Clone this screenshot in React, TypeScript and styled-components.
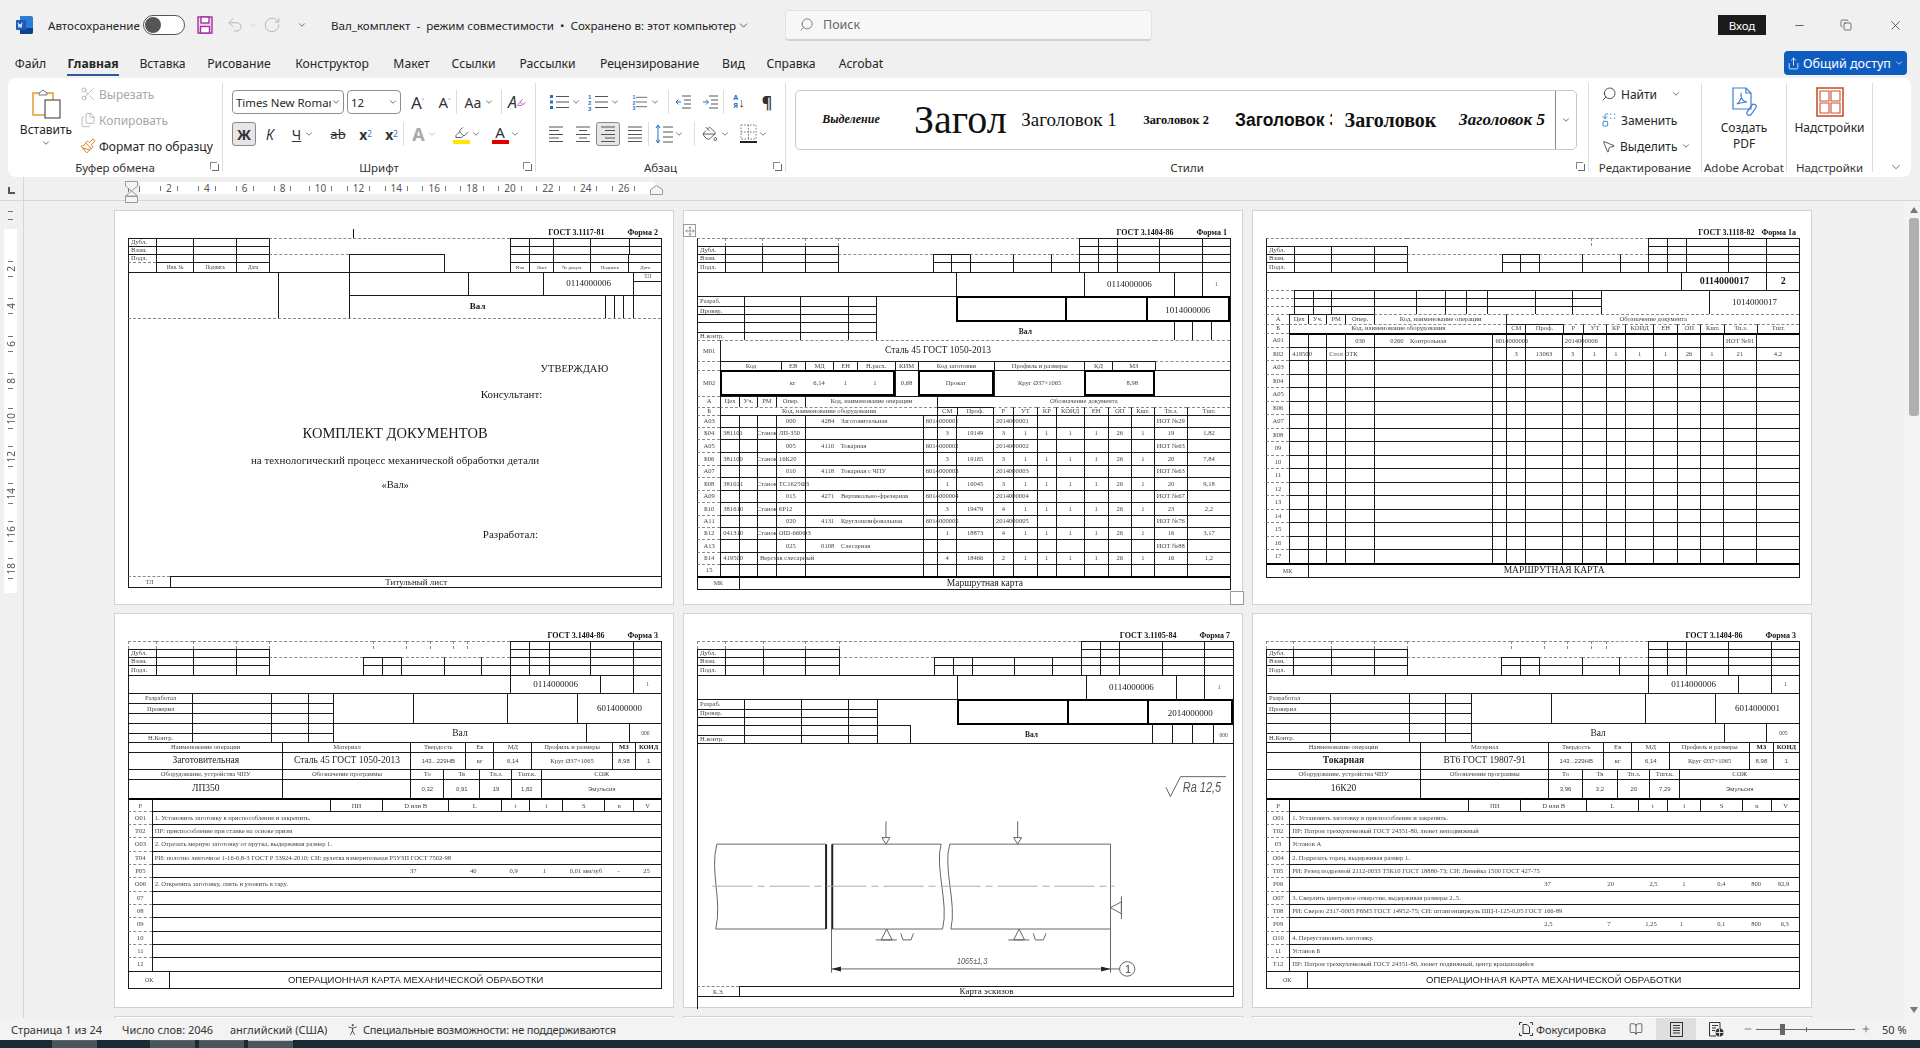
import React from "react";
import styled, { createGlobalStyle } from "styled-components";
import {
  ChevronDown, Undo2, RotateCw, Search, Scissors, Files, Paintbrush, X, Minus, Plus, Share,
  PaintBucket, Highlighter, PersonStanding, BookOpen, MousePointer2, Replace, Copy, Move,
} from "lucide-react";

const UI = `"Noto Sans", Roboto, sans-serif`;
const SERIF = `"Liberation Serif", serif`;

const Global = createGlobalStyle`
  html, body { margin: 0; padding: 0; background: #f0f0f0; }
  body { font-family: ${UI}; color: #262626; }
`;

const Shell = styled.div`
  width: 1920px;
  height: 1048px;
  display: flex;
  flex-direction: column;
  overflow: hidden;
  background: #f0f0f0;
`;

/* ---------- title bar ---------- */
const TitleBar = styled.div`
  height: 50px;
  display: flex;
  align-items: center;
  font-size: 11.6px;
  flex: none;
`;
const Gap = styled.div<{ $ml?: number; $w?: number }>`
  display: flex;
  align-items: center;
  flex: none;
  margin-left: ${(p) => p.$ml || 0}px;
  width: ${(p) => (p.$w ? p.$w + "px" : "auto")};
  white-space: nowrap;
`;
const Toggle = styled.div`
  width: 42px;
  height: 20px;
  border: 1px solid #555;
  border-radius: 11px;
  background: #fff;
  box-sizing: border-box;
  display: flex;
  align-items: center;
  padding-left: 1px;
  &::before {
    content: "";
    width: 16px;
    height: 16px;
    border-radius: 50%;
    background: #555;
  }
`;
const SearchBox = styled.div`
  width: 367px;
  height: 31px;
  background: #f7f7f7;
  border: 1px solid #e2e2e2;
  border-bottom: 2px solid #d2d2d2;
  border-radius: 4px;
  box-sizing: border-box;
  display: flex;
  align-items: center;
  margin-left: 35px;
  padding-left: 13px;
  gap: 9px;
  color: #666;
  font-size: 12.5px;
  flex: none;
`;
const LoginBtn = styled.div`
  width: 48px;
  height: 20px;
  background: #1b1b1b;
  color: #fff;
  font-size: 11.5px;
  display: flex;
  align-items: center;
  justify-content: center;
  margin-left: 566px;
  flex: none;
`;

/* ---------- tabs ---------- */
const MenuBar = styled.div`
  height: 28px;
  display: flex;
  align-items: flex-start;
  flex: none;
  position: relative;
  font-size: 12.2px;
`;
const Tab = styled.div<{ $x: number; $w: number; $active?: boolean }>`
  margin-left: ${(p) => p.$x}px;
  width: ${(p) => p.$w}px;
  flex: none;
  display: flex;
  justify-content: center;
  height: 24px;
  line-height: 27px;
  white-space: nowrap;
  font-weight: ${(p) => (p.$active ? 700 : 400)};
  border-bottom: ${(p) => (p.$active ? "2px solid #2b5a9c" : "0")};
`;
const ShareBtn = styled.div`
  position: absolute;
  left: 1784px;
  top: 1px;
  width: 123px;
  height: 24px;
  border-radius: 4px;
  background: #0f5cc0;
  color: #fff;
  display: flex;
  align-items: center;
  justify-content: center;
  gap: 3px;
  font-size: 12.5px;
`;

/* ---------- ribbon ---------- */
const Ribbon = styled.div`
  height: 99px;
  margin: 0 9px 0 8px;
  background: #fff;
  border-radius: 8px;
  display: flex;
  padding: 5px 0;
  box-sizing: border-box;
  flex: none;
  position: relative;
  font-size: 12px;
`;
const Group = styled.div<{ $w: number; $last?: boolean }>`
  width: ${(p) => p.$w}px;
  box-sizing: border-box;
  border-right: ${(p) => (p.$last ? "0" : "1px solid #dcdcdc")};
  display: flex;
  flex-direction: column;
  position: relative;
  flex: none;
`;
const GroupBody = styled.div`
  flex: 1;
  display: flex;
  min-height: 0;
`;
const GroupLabel = styled.div`
  height: 17px;
  padding-top: 6px;
  box-sizing: border-box;
  line-height: 14px;
  text-align: center;
  white-space: nowrap;
  font-size: 11.5px;
  color: #333;
  position: relative;
  flex: none;
`;
const Launcher = styled.span`
  position: absolute;
  right: 3px;
  top: 9px;
  width: 6px;
  height: 6px;
  border-right: 1px solid #666;
  border-bottom: 1px solid #666;
  &::before {
    content: "";
    position: absolute;
    left: -2px;
    top: -2px;
    width: 6px;
    height: 6px;
    border-left: 1px solid #888;
    border-top: 1px solid #888;
  }
`;
const PasteCol = styled.div`
  width: 76px;
  display: flex;
  flex-direction: column;
  align-items: center;
  padding-top: 5px;
  flex: none;
`;
const PasteLabel = styled.div`
  margin-top: 3px;
  line-height: 16px;
`;
const ClipCol = styled.div`
  display: flex;
  flex-direction: column;
  margin: -2px 0 0 -4px;
`;
const ClipRow = styled.div<{ $off?: boolean }>`
  height: 26px;
  flex: none;
  display: flex;
  align-items: center;
  gap: 3px;
  white-space: nowrap;
  color: ${(p) => (p.$off ? "#a8a8a8" : "#262626")};
`;
const ToolRows = styled.div`
  display: flex;
  flex-direction: column;
  gap: 8px;
  padding: 7px 0 0 9px;
`;
const ToolRow = styled.div`
  display: flex;
  align-items: center;
  height: 24px;
  flex: none;
`;
const Tool = styled.div<{ $w?: number; $ml?: number; $on?: boolean; $off?: boolean; $fs?: number }>`
  width: ${(p) => p.$w || 16}px;
  height: 24px;
  margin-left: ${(p) => p.$ml || 0}px;
  display: flex;
  align-items: center;
  justify-content: center;
  flex: none;
  box-sizing: border-box;
  color: ${(p) => (p.$off ? "#aaa" : "#333")};
  border-radius: 3px;
  background: ${(p) => (p.$on ? "#e6e6e6" : "none")};
  border: ${(p) => (p.$on ? "1px solid #8a8a8a" : "0")};
  font-size: ${(p) => p.$fs || 13}px;
  sup, sub {
    font-size: 8px;
    line-height: 0;
    color: #2a75c8;
  }
`;
const ColorStack = styled.div`
  display: flex;
  flex-direction: column;
  align-items: center;
  line-height: 15px;
`;
const ColorBar = styled.div<{ $c: string }>`
  width: 17px;
  height: 4px;
  background: ${(p) => p.$c};
`;
const Sep = styled.div<{ $ml: number }>`
  width: 1px;
  height: 24px;
  background: #dcdcdc;
  margin-left: ${(p) => p.$ml}px;
  flex: none;
`;
const FieldBox = styled.div<{ $w: number; $ml?: number }>`
  width: ${(p) => p.$w}px;
  height: 24px;
  margin-left: ${(p) => p.$ml || 0}px;
  border: 1px solid #8e8e8e;
  border-radius: 4px;
  box-sizing: border-box;
  display: flex;
  align-items: center;
  justify-content: space-between;
  padding: 0 2px 0 3px;
  font-size: 11.4px;
  white-space: nowrap;
  overflow: hidden;
  flex: none;
`;
const Clip = styled.span`
  overflow: hidden;
  flex: 1;
`;
const SmallChev = styled(ChevronDown).attrs({ size: 10, strokeWidth: 1.6 })`
  flex: none;
`;
const Gallery = styled.div`
  margin: 7px 0 0 9px;
  width: 782px;
  height: 60px;
  border: 1px solid #c8c8c8;
  border-radius: 5px;
  box-sizing: border-box;
  display: flex;
  align-items: center;
  overflow: hidden;
`;
const StyleItem = styled.div<{ $w: number; $size: number; $i?: boolean; $b?: boolean; $sans?: boolean; $left?: boolean }>`
  width: ${(p) => p.$w}px;
  flex: none;
  overflow: hidden;
  white-space: nowrap;
  color: #111;
  text-align: ${(p) => (p.$left ? "left" : "center")};
  padding-left: ${(p) => (p.$left ? 8 : 0)}px;
  box-sizing: border-box;
  font-family: ${(p) => (p.$sans ? `"Liberation Sans", sans-serif` : SERIF)};
  font-size: ${(p) => p.$size}px;
  line-height: 1.15;
  font-style: ${(p) => (p.$i ? "italic" : "normal")};
  font-weight: ${(p) => (p.$b ? 700 : 400)};
`;
const GalleryArrow = styled.div`
  margin-left: auto;
  width: 23px;
  height: 100%;
  border-left: 1px solid #8a8a8a;
  box-sizing: border-box;
  display: flex;
  align-items: center;
  justify-content: center;
`;
const EditCol = styled.div`
  display: flex;
  flex-direction: column;
  padding-left: 12px;
  margin-top: -2px;
`;
const EditRow = styled.div`
  height: 26px;
  flex: none;
  display: flex;
  align-items: center;
  gap: 4px;
  white-space: nowrap;
`;
const BigCol = styled.div`
  flex: 1;
  display: flex;
  flex-direction: column;
  align-items: center;
  padding-top: 4px;
  line-height: 16px;
  text-align: center;
`;
const BigIcon = styled.div`
  height: 33px;
  line-height: 0;
`;
const Collapse = styled.div`
  position: absolute;
  right: 8px;
  bottom: 3px;
  color: #444;
  line-height: 0;
`;

/* ---------- rulers ---------- */
const RulerBar = styled.div`
  height: 24px;
  display: flex;
  border-bottom: 1px solid #d6d6d6;
  box-sizing: border-box;
  flex: none;
  position: relative;
`;
const Corner = styled.div`
  width: 24px;
  box-sizing: border-box;
  border-right: 1px solid #d6d6d6;
  display: flex;
  align-items: center;
  justify-content: center;
  &::before {
    content: "";
    width: 5px;
    height: 5px;
    margin-top: 3px;
    border-left: 2px solid #555;
    border-bottom: 2px solid #555;
  }
`;
const HTicks = styled.div`
  margin: 9px 0 0 88px;
  width: 28px;
  height: 6px;
  display: flex;
  gap: 10px;
  justify-content: flex-end;
  &::before, &::after {
    content: "";
    width: 1px;
    height: 6px;
    background: #777;
  }
`;
const HStrip = styled.div`
  margin-top: 5px;
  width: 515px;
  height: 12px;
  background: #fff;
  padding-left: 10px;
  box-sizing: border-box;
  display: flex;
`;
const HCell = styled.div`
  width: 37.9px;
  flex: none;
  display: flex;
  align-items: center;
  justify-content: center;
  gap: 5px;
  font-size: 10px;
  line-height: 12px;
  color: #555;
  &::before, &::after {
    content: "";
    width: 1px;
    height: 5px;
    background: #777;
  }
`;
const IndentMark = styled.div<{ $x: number; $y: number; $h: number }>`
  position: absolute;
  left: ${(p) => p.$x}px;
  top: ${(p) => p.$y}px;
  width: 12px;
  height: ${(p) => p.$h}px;
  line-height: 0;
`;
const DocArea = styled.div`
  flex: 1;
  display: flex;
  min-height: 0;
`;
const VRuler = styled.div`
  width: 23px;
  flex: none;
  display: flex;
  flex-direction: column;
  align-items: flex-start;
  padding-left: 4px;
  box-sizing: border-box;
`;
const VTicks = styled.div`
  height: 28px;
  width: 13px;
  flex: none;
  display: flex;
  flex-direction: column;
  align-items: center;
  justify-content: center;
  gap: 7px;
  &::before, &::after {
    content: "";
    width: 5px;
    height: 1px;
    background: #777;
  }
`;
const VStrip = styled.div`
  width: 13px;
  height: 364px;
  background: #fff;
  padding-top: 21px;
  box-sizing: border-box;
  display: flex;
  flex-direction: column;
  flex: none;
`;
const VCell = styled.div`
  height: 37.5px;
  flex: none;
  display: flex;
  flex-direction: column;
  align-items: center;
  justify-content: center;
  gap: 4px;
  color: #555;
  font-size: 10px;
  &::before, &::after {
    content: "";
    width: 5px;
    height: 1px;
    background: #777;
  }
`;
const VNum = styled.span`
  writing-mode: vertical-rl;
  transform: rotate(180deg);
  line-height: 12px;
`;
const Canvas = styled.div`
  flex: 1;
  border-left: 1px solid #d6d6d6;
  overflow: hidden;
  padding: 9px 0 0 90px;
`;
const PageGrid = styled.div`
  display: grid;
  grid-template-columns: repeat(3, 560px);
  column-gap: 9px;
  row-gap: 8px;
`;
const Scrollbar = styled.div`
  width: 17px;
  flex: none;
  background: #f3f3f3;
  display: flex;
  flex-direction: column;
  align-items: center;
  position: relative;
  padding-top: 6px;
  box-sizing: border-box;
`;
const ScrollArrow = styled.div<{ $down?: boolean }>`
  width: 0;
  height: 0;
  margin-left: 4px;
  border-left: 4px solid transparent;
  border-right: 4px solid transparent;
  ${(p) => (p.$down ? "border-top: 6px solid #777; margin-top: auto; margin-bottom: 5px;" : "border-bottom: 6px solid #777;")}
`;
const ScrollThumb = styled.div`
  width: 10px;
  height: 198px;
  margin: 5px 0 0 5px;
  border-radius: 3px;
  background: #b0b0b0;
`;

/* ---------- pages ---------- */
const Page = styled.div`
  width: 560px;
  height: 395px;
  background: #fff;
  border: 1px solid #d2d2d2;
  box-sizing: border-box;
  padding-left: 13px;
  position: relative;
  filter: blur(0.3px);
`;
const GostLine = styled.div<{ $gap: number; $w: number }>`
  width: ${(p) => p.$w}px;
  height: 27px;
  box-sizing: border-box;
  display: flex;
  justify-content: flex-end;
  align-items: flex-end;
  gap: ${(p) => p.$gap}px;
  padding-right: 4px;
  font: 700 8px/10px ${SERIF};
  color: #111;
  white-space: nowrap;
`;
const SheetBox = styled.div<{ $w: number }>`
  width: ${(p) => p.$w}px;
  box-sizing: content-box;
  border-right: 1px solid #1a1a1a;
  border-bottom: 1px solid #1a1a1a;
`;
const SheetRow = styled.div<{ $h: number; $cols: string }>`
  height: ${(p) => p.$h}px;
  display: grid;
  grid-template-columns: ${(p) => p.$cols};
`;
const edge = (k?: string) =>
  k === "n" ? "0" : k === "d" ? "1px dashed #8a8a8a" : k === "T" ? "2px solid #000" : "1px solid #1a1a1a";
const SheetCell = styled.div<{ $t?: string; $l?: string; $r?: boolean; $b?: boolean; $fs: number; $bold?: boolean; $left?: boolean; $v?: string; $sans?: boolean }>`
  min-width: 0;
  box-sizing: border-box;
  border-top: ${(p) => edge(p.$t)};
  border-left: ${(p) => edge(p.$l)};
  border-right: ${(p) => (p.$r ? edge("T") : "0")};
  border-bottom: ${(p) => (p.$b ? edge("T") : "0")};
  display: flex;
  justify-content: ${(p) => (p.$left ? "flex-start" : "center")};
  align-items: ${(p) => (p.$v === "lo" ? "flex-end" : p.$v === "hi" ? "flex-start" : "center")};
  padding-left: ${(p) => (p.$left ? 2 : 0)}px;
  padding-top: ${(p) => (p.$v === "hi" ? 2 : 0)}px;
  font-family: ${(p) => (p.$sans ? `"Liberation Sans", sans-serif` : SERIF)};
  font-size: ${(p) => p.$fs}px;
  font-weight: ${(p) => (p.$bold ? 700 : 400)};
  color: ${(p) => (p.$fs >= 8 || p.$bold ? "#1a1a1a" : "#444")};
  line-height: ${(p) => (p.$v ? 0 : 1)};
  white-space: nowrap;
`;
const TextCaret = styled.div`
  position: absolute;
  left: 238px;
  top: 18px;
  width: 1px;
  height: 9px;
  background: #111;
`;
const MoveHandle = styled.div`
  position: absolute;
  left: -1px;
  top: 13px;
  width: 13px;
  height: 13px;
  border: 1px solid #999;
  background: #fff;
  box-sizing: border-box;
  display: flex;
  align-items: center;
  justify-content: center;
`;
const SizeHandle = styled.div`
  position: absolute;
  left: 546px;
  top: 380px;
  width: 14px;
  height: 14px;
  border: 1px solid #999;
  background: #fff;
  box-sizing: border-box;
`;

/* ---------- status + taskbar ---------- */
const StatusBar = styled.div`
  height: 22px;
  background: #f3f3f3;
  display: flex;
  align-items: center;
  font-size: 11px;
  flex: none;
  white-space: nowrap;
  color: #333;
`;
const TightText = styled.span`
  letter-spacing: -0.2px;
`;
const ViewBtn = styled.div<{ $x: number; $on?: boolean }>`
  margin-left: ${(p) => p.$x}px;
  width: 40px;
  height: 22px;
  display: flex;
  align-items: center;
  justify-content: center;
  flex: none;
  background: ${(p) => (p.$on ? "#dedede" : "none")};
`;
const Zoomer = styled.div`
  margin-left: 3px;
  width: 99px;
  height: 11px;
  flex: none;
  position: relative;
  display: flex;
  align-items: center;
  &::before {
    content: "";
    width: 100%;
    height: 1px;
    background: #666;
  }
`;
const ZoomThumb = styled.div`
  position: absolute;
  left: 24px;
  top: 0;
  width: 5px;
  height: 11px;
  background: #666;
`;
const ZoomTick = styled.div`
  position: absolute;
  left: 50px;
  top: 3px;
  width: 1px;
  height: 5px;
  background: #666;
`;
const Taskbar = styled.div`
  height: 8px;
  background: #1c2a33;
  display: flex;
  flex: none;
`;
const TaskThumb = styled.div<{ $x: number; $on?: boolean }>`
  width: 45px;
  height: 8px;
  margin-left: ${(p) => p.$x}px;
  background: #4a555c;
  border-top: 1px solid ${(p) => (p.$on ? "#c8c8c8" : "#5a666d")};
  box-sizing: border-box;
`;
const SortText = styled.span`
  font-size: 7px;
  line-height: 8px;
  font-weight: 700;
  color: #1f6fc4;
`;

/* ---------- sheet data, rows measured in ruler units of the scan ---------- */
type CellSpec = [number, React.ReactNode?, string?, number?];
type RowSpec = [number, CellSpec[]];

function Sheet({ x0, y0, sx, rows }: { x0: number; y0: number; sx: number; rows: RowSpec[] }) {
  let y = y0;
  const end = rows[0][1][rows[0][1].length - 1][0];
  return (
    <SheetBox $w={Math.round((end - x0) / sx)}>
      {rows.map(([yEnd, cells], i) => {
        const h = +((yEnd - y) / 3).toFixed(2);
        y = yEnd;
        let x = x0;
        const cols = cells
          .map((c) => {
            const w = ((c[0] - x) / sx).toFixed(2);
            x = c[0];
            return w + "px";
          })
          .join(" ");
        return (
          <SheetRow key={i} $h={h} $cols={cols}>
            {cells.map((c, j) => {
              const f = (c[2] || "").split(" ");
              let text = c[1];
              const left = typeof text === "string" && text.startsWith("<");
              if (left) text = (text as string).slice(1);
              return (
                <SheetCell
                  key={j}
                  $t={f.includes("nt") ? "n" : f.includes("dt") ? "d" : f.includes("Tt") ? "T" : "s"}
                  $l={f.includes("nl") ? "n" : f.includes("dl") ? "d" : f.includes("Tl") ? "T" : "s"}
                  $r={f.includes("Tr")}
                  $b={f.includes("Tb")}
                  $bold={f.includes("b")}
                  $sans={f.includes("a")}
                  $left={left}
                  $v={f.includes("lo") ? "lo" : f.includes("hi") ? "hi" : undefined}
                  $fs={c[3] || 6.6}
                >
                  {text}
                </SheetCell>
              );
            })}
          </SheetRow>
        );
      })}
    </SheetBox>
  );
}

const sp = "\u2003";
const right = (xs: number[], texts: string[] = []): CellSpec[] => xs.map((x, i) => [x, texts[i] || "", "", 5]);
const smallTable = (xs: number[], label: string): CellSpec[] => xs.map((x, i) => [x, i === 0 && label ? "<" + label : ""]);
const routeRow = (xs: number[], y: number, vals: Record<number, string>, tf = ""): RowSpec => [
  y,
  xs.map((x, i) => [x, vals[i] || "", i === 0 ? "dt" : tf]),
];
const numRow = (y: number, label: string, split: number, end: number, nums: [number, string][]): RowSpec => {
  const cells: CellSpec[] = [[split, label, "dt"]];
  nums.forEach(([c, t], i) => {
    cells.push([c - 18, "", i === 0 ? "" : "nl"]);
    cells.push([c + 18, t, "nl"]);
  });
  cells.push([end, "", "nl"]);
  return [y, cells];
};
const opRow = (y: number, label: string, split: number, end: number, text = ""): RowSpec => [
  y,
  [[split, label, "dt"], [end, text ? "<" + text : ""]],
];

/* sheet 1: title page */
const R1 = [1154, 1220, 1322, 1427, 1517];
const L1 = [128, 229, 348, 438];
const rows1: RowSpec[] = [
  [124, [...smallTable(L1, "Дубл."), [1101, "", "dt"], ...right(R1)]],
  [148, [...smallTable(L1, "Взам."), [1101, "", "nt"], ...right(R1)]],
  [172, [...smallTable(L1, "Подл."), [658, "", "dt"], [920], [1101, "", "nt"], ...right(R1)]],
  [202, [[128, "", "dt"], [229, "Инв. №", "", 5.3], [348, "Подпись", "", 5.3], [438, "Дата", "", 5.3], [658, "", "nt"], [920, "", "nt"], [1101, "", "nt"], ...right(R1, ["Изм", "Лист", "№ докум.", "Подпись", "Дата"])]],
  [230, [[463], [658], [986], [1192], [1440], [1517, "ТЛ", "", 5.5]]],
  [271, [[463, "", "nt"], [658, "", "nt"], [986, "", "nt"], [1192, "", "nt"], [1440, "0114000006", "nt hi", 9], [1517]]],
  [340, [[463, "", "nt"], [658, "", "nt"], [1363, "Вал", "b", 9], [1388], [1412], [1440], [1517]]],
  [470, [[1517, "", "dt"]]],
  [520, [[1039, "", "nt"], [1517, "УТВЕРЖДАЮ", "nt nl", 10.5]]],
  [620, [[693, "", "nt"], [1517, "Консультант:", "nt nl", 11]]],
  [750, [[1517, "КОМПЛЕКТ ДОКУМЕНТОВ", "nt", 14.5]]],
  [784, [[1517, "на технологический процесс механической обработки детали", "nt", 11]]],
  [900, [[1517, "«Вал»", "nt", 10.5]]],
  [1080, [[687, "", "nt"], [1517, "Разработал:", "nt nl", 11]]],
  [1115, [[1517, "", "nt"]]],
  [1147, [[166, "ТЛ", "dt", 6], [1517, "Титульный лист", "", 9]]],
];

/* sheet 2: route card */
const R2 = [1151, 1203, 1319, 1437, 1514];
const L2 = [126, 227, 346, 437];
const Lk = [177, 331, 463, 540];
const C2 = [112, 163, 213, 265, 345, 669, 708, 762, 862, 917, 983, 1035, 1112, 1178, 1242, 1305, 1397, 1514];
const rows2: RowSpec[] = [
  [124, [[126, "", "dt"], [227, "", "dt dl"], [346, "", "dt dl"], [437, "", "dt dl"], [1098, "", "dt dl"], ...right(R2)]],
  [148, [...smallTable(L2, "Дубл."), [1098, "", "nt"], ...right(R2)]],
  [173, [...smallTable(L2, "Взам."), [697, "", "dt"], [747], [800], [917, "", "dt"], [1022, "", "dt"], [1098, "", "dt"], ...right(R2)]],
  [202, [...smallTable(L2, "Подл."), [697, "", "nt"], [747], [800], [917], [1022], [1098], ...right(R2)]],
  [275, [[760], [1112], [1360, "0114000006", "", 9], [1437], [1514, "1", "", 5.5]]],
  [304, [...smallTable(Lk, "Разраб."), [760], [1060, "", "Tt Tl"], [1282, "", "Tt Tl"], [1514, "", "Tt Tl Tr"]]],
  [329, [...smallTable(Lk, "Провер."), [760, "", "nt"], [1060, "", "nt Tl"], [1282, "", "nt Tl"], [1514, "1014000006", "nt Tl Tr", 9]]],
  [353, [...smallTable(Lk, ""), [760, "", "nt"], [1060, "", "nt Tl Tb"], [1282, "", "nt Tl Tb"], [1514, "", "nt Tl Tr Tb"]]],
  [381, [...smallTable(Lk, ""), [1360, "Вал", "nt b lo", 7.5], [1409, "", "nt"], [1462, "", "nt"], [1514, "", "nt"]]],
  [405, [...smallTable(Lk, "Н.контр."), [1360, "", "nt"], [1409, "", "nt"], [1462, "", "nt"], [1514, "", "nt"]]],
  [470, [[112, "М01", "dt"], [1307, "Сталь 45 ГОСТ 1050-2013", "dt", 9.5], [1514, "", "dt nl"]]],
  [497, [[112, "", "dt"], [278, "Код"], [345, "ЕВ"], [423, "МД"], [488, "ЕН"], [592, "Н.расх."], [655, "КИМ"], [866, "Код заготовки"], [1113, "Профиль и размеры"], [1190, "КД"], [1307, "МЗ"], [1514, "", "dt"]]],
  [573, [[112, "М02", "dt"], [278, "", "Tt Tl Tb"], [345, "кг", "Tt nl Tb"], [423, "6,14", "Tt nl Tb"], [488, "1", "Tt nl Tb"], [592, "1", "Tt nl Tb Tr"], [655, "0,68"], [866, "Прокат", "Tt Tl Tb Tr"], [1113, "Круг Ø37×1065"], [1190, "", "Tt Tl Tb"], [1307, "8,98", "Tt nl Tb Tr"], [1514, "", "nl"]]],
  [606, [[112, "А", "dt"], [163, "Цех"], [213, "Уч."], [265, "РМ"], [345, "Опер."], [708, "Код, наименование операции"], [1514, "Обозначение документа"]]],
  [632, [[112, "Б", "dt"], [708, "Код, наименование оборудования", "dt"], [762, "СМ"], [862, "Проф."], [917, "Р", "dt"], [983, "УТ", "dt"], [1035, "КР", "dt"], [1112, "КОИД", "dt"], [1178, "ЕН", "dt"], [1242, "ОП", "dt"], [1305, "Кшт.", "dt"], [1397, "Тп.з.", "dt"], [1514, "Тшт.", "dt"]]],
  routeRow(C2, 668, { 0: "А03", 4: "000", 5: `<${sp}${sp}4284${sp}Заготовительная`, 6: "<6014000001", 9: "<2014000001", 16: "<ИОТ №29" }),
  routeRow(C2, 704, { 0: "Б04", 1: "<381101", 3: "Станок", 4: "<ЛП-350", 7: "3", 8: "19149", 9: "3", 10: "1", 11: "1", 12: "1", 13: "1", 14: "26", 15: "1", 16: "19", 17: "1,82" }),
  routeRow(C2, 743, { 0: "А05", 4: "005", 5: `<${sp}${sp}4110${sp}Токарная`, 6: "<6014000002", 9: "<2014000002", 16: "<ИОТ №63" }),
  routeRow(C2, 781, { 0: "Б06", 1: "<381100", 3: "Станок", 4: "<16К20", 7: "3", 8: "19165", 9: "3", 10: "1", 11: "1", 12: "1", 13: "1", 14: "26", 15: "1", 16: "20", 17: "7,84" }),
  routeRow(C2, 818, { 0: "А07", 4: "010", 5: `<${sp}${sp}4118${sp}Токарная с ЧПУ`, 6: "<6014000003", 9: "<2014000003", 16: "<ИОТ №63" }),
  routeRow(C2, 857, { 0: "Б08", 1: "<381021", 3: "Станок", 4: "<ТС1625Ф3", 7: "1", 8: "16045", 9: "3", 10: "1", 11: "1", 12: "1", 13: "1", 14: "26", 15: "1", 16: "20", 17: "9,18" }),
  routeRow(C2, 893, { 0: "А09", 4: "015", 5: `<${sp}${sp}4271${sp}Вертикально-фрезерная`, 6: "<6014000004", 9: "<2014000004", 16: "<ИОТ №67" }),
  routeRow(C2, 932, { 0: "Б10", 1: "<381610", 3: "Станок", 4: "<6Р12", 7: "3", 8: "19479", 9: "4", 10: "1", 11: "1", 12: "1", 13: "1", 14: "26", 15: "1", 16: "23", 17: "2,2" }),
  routeRow(C2, 968, { 0: "А11", 4: "020", 5: `<${sp}${sp}4131${sp}Круглошлифовальная`, 6: "<6014000005", 9: "<2014000005", 16: "<ИОТ №76" }),
  routeRow(C2, 1004, { 0: "Б12", 1: "<041310", 3: "Станок", 4: "<ОШ-660Ф3", 7: "1", 8: "18873", 9: "4", 10: "1", 11: "1", 12: "1", 13: "1", 14: "26", 15: "1", 16: "16", 17: "3,17" }),
  routeRow(C2, 1043, { 0: "А13", 4: "025", 5: `<${sp}${sp}0108${sp}Слесарная`, 16: "<ИОТ №88" }),
  routeRow(C2, 1078, { 0: "Б14", 1: "<419500", 3: "<Верстак слесарный", 7: "4", 8: "18466", 9: "2", 10: "1", 11: "1", 12: "1", 13: "1", 14: "26", 15: "1", 16: "16", 17: "1,2" }),
  routeRow(C2, 1115, { 0: "15" }),
  [1152, [[163, "МК", "Tt", 6], [1514, "Маршрутная карта", "Tt", 9.5]]],
];

/* sheet 3: route card, clean */
const R3 = [968, 1013, 1113, 1204, 1282];
const L3 = [82, 170, 272, 351];
const C3 = [70, 115, 158, 203, 272, 553, 586, 631, 718, 766, 823, 868, 935, 992, 1046, 1101, 1179, 1282];
const M3 = [127, 170, 272, 372, 441, 491, 541, 655, 743, 812];
const labels3: [number, string][] = [[508, "А03"], [548, "Б04"], [590, "А05"], [628, "Б06"], [670, "А07"], [709, "Б08"], [751, "09"], [790, "10"], [832, "11"], [871, "12"], [913, "13"], [952, "14"], [994, "15"], [1033, "16"], [1075, "17"]];
const rows3: RowSpec[] = [
  [124, [[351, "", "dt"], [787, "", "dt nl"], [923, "", "dt dl"], ...right(R3)]],
  [148, [...smallTable(L3, "Дубл."), [923, "", "nt"], ...right(R3)]],
  [173, [...smallTable(L3, "Взам."), [576, "", "dt"], [619], [664], [766, "", "dt"], [856, "", "dt"], [923, "", "dt"], ...right(R3)]],
  [202, [...smallTable(L3, "Подл."), [576, "", "nt"], [619], [664], [766], [856], [923], ...right(R3)]],
  [256, [[1002], [1204, "0114000017", "b", 10], [1282, "2", "b", 10]]],
  [281, [[82, "", "dt"], ...M3.map((x): CellSpec => [x]), [1068, "", ""], [1282]]],
  [305, [[82, "", "dt"], ...M3.map((x): CellSpec => [x]), [1068, "", "nt"], [1282, "1014000017", "nt", 9]]],
  [328, [[82, "", "dt"], ...M3.map((x): CellSpec => [x]), [1068, "", "nt"], [1282, "", "nt"]]],
  [357, [[70, "А", "dt"], [115, "Цех"], [158, "Уч."], [203, "РМ"], [272, "Опер."], [586, "Код, наименование операции", "dt"], [1282, "Обозначение документа", "dt"]]],
  [384, [[70, "Б", "dt"], [586, "Код, наименование оборудования", "dt"], [631, "СМ"], [720, "Проф."], [768, "Р", "dt"], [823, "УТ", "dt"], [868, "КР", "dt"], [935, "КОИД", "dt"], [992, "ЕН", "dt"], [1047, "ОП", "dt"], [1104, "Кшт.", "dt"], [1181, "Тп.з.", "dt"], [1282, "Тшт.", "dt"]]],
  routeRow(C3, 428, { 0: "А01", 4: "030", 5: `<${sp}${sp}0260${sp}Контрольная`, 6: "<6014000006", 9: "<2014000006", 16: "<ИОТ №91" }, "Tt"),
  routeRow(C3, 466, { 0: "Б02", 1: "<419500", 3: "<Стол ОТК", 7: "3", 8: "13063", 9: "3", 10: "1", 11: "1", 12: "1", 13: "1", 14: "26", 15: "1", 16: "21", 17: "4,2" }),
  ...labels3.map(([y, t]) => routeRow(C3, y, { 0: t })),
  [1117, [[115, "МК", "Tt", 6], [1282, "МАРШРУТНАЯ КАРТА", "Tt", 9.5]]],
];

/* sheets 4 and 6: operation cards */
const opHead = (x: { L: number[]; R: number[]; top: CellSpec[]; mid: CellSpec[]; midB: CellSpec[]; code: CellSpec[] }): RowSpec[] => [
  [118, [...x.top, ...right(x.R)]],
  [142, [...smallTable(x.L, "Дубл."), [x.mid[x.mid.length - 1][0], "", "nt"], ...right(x.R)]],
  [166, [...smallTable(x.L, "Взам."), ...x.mid, ...right(x.R)]],
  [196, [...smallTable(x.L, "Подл."), ...x.midB, ...right(x.R)]],
  [250, x.code],
];
const S4 = [227, 444, 544, 614];
const rows4: RowSpec[] = [
  ...opHead({
    L: [126, 229, 348, 438],
    R: [1154, 1207, 1322, 1440, 1517],
    top: [[126, "", "dt dl"], [229, "", "dt dl"], [348, "", "dt dl"], [438, "", "dt dl"], [724, "", "dt dl"], [815, "", "dt dl"], [880, "", "dt dl"], [945, "", "dt dl"], [983, "", "dt dl"], [1101, "", "dt dl"]],
    mid: [[697, "", "dt"], [749], [802], [920, "", "dt"], [1022, "", "dt"], [1101, "", "dt"]],
    midB: [[697, "", "nt"], [749], [802], [920], [1022], [1101]],
    code: [[1101], [1349, "0114000006", "", 9], [1440], [1517, "1", "", 5.5]],
  }),
  [281, [[227, "Разработал"], [444], [544], [614], [835], [1094], [1285], [1517]]],
  [311, [[227, "Проверил"], [444], [544], [614], [835, "", "nt"], [1094, "", "nt"], [1285, "", "nt"], [1517, "6014000000", "nt", 9]]],
  [341, [...smallTable(S4, ""), [835, "", "nt"], [1094, "", "nt"], [1285, "", "nt"], [1517, "", "nt"]]],
  [371, [...smallTable(S4, ""), [1310, "Вал", "lo", 9.5], [1427], [1517, "000", "lo", 5.5]]],
  [397, [[227, "Н.Контр."], [444], [544], [614], [1310, "", "nt"], [1427, "", "nt"], [1517, "", "nt"]]],
  [427, [[475, "Наименование операции"], [827, "Материал"], [978, "Твердость"], [1055, "Ев"], [1160, "МД"], [1381, "Профиль и размеры"], [1445, "МЗ", "b"], [1517, "КОИД", "b"]]],
  [478, [[475, "Заготовительная", "", 9.5], [827, "Сталь 45 ГОСТ 1050-2013", "", 9.5], [978, "143...229НВ", "a", 6], [1055, "кг"], [1160, "6,14", "a", 6], [1381, "Круг Ø37×1065"], [1445, "8,98", "a", 6], [1517, "1", "a", 6]]],
  [508, [[475, "Оборудование, устройства ЧПУ"], [827, "Обозначение программы"], [917, "То"], [1017, "Тв"], [1105, "Тп.з."], [1187, "Тшт.к."], [1517, "СОЖ"]]],
  [566, [[475, "ЛП350", "", 9.5], [827], [917, "0,32", "a", 6], [1017, "0,91", "a", 6], [1105, "19", "a", 6], [1187, "1,82", "a", 6], [1517, "Эмульсия", "a", 6]]],
  [605, [[115, "Р", "Tt"], [606, "", "Tt"], [749, "ПИ", "Tt"], [931, "D или В", "Tt"], [1075, "L", "Tt"], [1154, "t", "Tt"], [1245, "i", "Tt"], [1360, "S", "Tt"], [1440, "n", "Tt"], [1517, "V", "Tt"]]],
  opRow(643, "О01", 115, 1517, "1. Установить заготовку в приспособление и закрепить."),
  opRow(683, "Т02", 115, 1517, "ПР: приспособление при станке на основе призм"),
  opRow(724, "О03", 115, 1517, "2. Отрезать мерную заготовку от прутка, выдерживая размер 1."),
  opRow(763, "Т04", 115, 1517, "РИ: полотно ленточное 1-16-0,8-3 ГОСТ Р 53924-2010; СИ: рулетка измерительная Р5УЗП ГОСТ 7502-98"),
  numRow(803, "Р05", 115, 1517, [[835, "37"], [1000, "40"], [1111, "0,9"], [1196, "1"], [1310, "0,01 мм/зуб"], [1400, "-"], [1477, "25"]]),
  opRow(844, "О06", 115, 1517, "2. Открепить заготовку, снять и уложить в тару."),
  opRow(884, "07", 115, 1517),
  opRow(922, "08", 115, 1517),
  opRow(965, "09", 115, 1517),
  opRow(1003, "10", 115, 1517),
  opRow(1043, "11", 115, 1517),
  opRow(1084, "12", 115, 1517),
  [1135, [[163, "ОК", "", 6], [1517, "ОПЕРАЦИОННАЯ КАРТА МЕХАНИЧЕСКОЙ ОБРАБОТКИ", "a", 9.5]]],
];

const S6 = [168, 355, 441, 502];
const rows6: RowSpec[] = [
  ...opHead({
    L: [79, 170, 272, 351],
    R: [968, 1013, 1113, 1215, 1282],
    top: [[79, "", "dt dl"], [170, "", "dt dl"], [272, "", "dt dl"], [351, "", "dt dl"], [598, "", "dt dl"], [676, "", "dt dl"], [730, "", "dt dl"], [787, "", "dt dl"], [822, "", "dt dl"], [923, "", "dt dl"]],
    mid: [[574, "", "dt"], [619], [664], [766, "", "dt"], [854, "", "dt"], [923, "", "dt"]],
    midB: [[574, "", "nt"], [619], [664], [766], [854], [923]],
    code: [[923], [1137, "0114000006", "", 9], [1215], [1282, "1", "", 5.5]],
  }),
  [281, [...smallTable(S6, "Разработал"), [692], [916], [1082], [1282]]],
  [311, [...smallTable(S6, "Проверил"), [692, "", "nt"], [916, "", "nt"], [1082, "", "nt"], [1282, "6014000001", "nt", 9]]],
  [341, [...smallTable(S6, ""), [692, "", "nt"], [916, "", "nt"], [1082, "", "nt"], [1282, "", "nt"]]],
  [371, [...smallTable(S6, ""), [1104, "Вал", "lo", 9.5], [1204], [1282, "005", "lo", 5.5]]],
  [397, [...smallTable(S6, "Н.Контр."), [1104, "", "nt"], [1204, "", "nt"], [1282, "", "nt"]]],
  [427, [[381, "Наименование операции"], [686, "Материал"], [816, "Твердость"], [883, "Ев"], [973, "МД"], [1163, "Профиль и размеры"], [1219, "МЗ", "b"], [1282, "КОИД", "b"]]],
  [478, [[381, "Токарная", "b", 9.5], [686, "ВТ6 ГОСТ 19807-91", "", 9.5], [816, "143...229НВ", "a", 6], [883, "кг"], [973, "6,14", "a", 6], [1163, "Круг Ø37×1065"], [1219, "8,98", "a", 6], [1282, "1", "a", 6]]],
  [508, [[381, "Оборудование, устройства ЧПУ"], [686, "Обозначение программы"], [765, "То"], [850, "Тв"], [926, "Тп.з."], [997, "Тшт.к."], [1282, "СОЖ"]]],
  [566, [[381, "16К20", "", 9.5], [686], [765, "3,96", "a", 6], [850, "3,2", "a", 6], [926, "20", "a", 6], [997, "7,29", "a", 6], [1282, "Эмульсия", "a", 6]]],
  [605, [[70, "Р", "Tt"], [496, "", "Tt"], [619, "ПИ", "Tt"], [776, "D или В", "Tt"], [898, "L", "Tt"], [968, "t", "Tt"], [1047, "i", "Tt"], [1146, "S", "Tt"], [1215, "n", "Tt"], [1282, "V", "Tt"]]],
  opRow(643, "О01", 70, 1282, "1. Установить заготовку в приспособление и закрепить."),
  opRow(683, "Т02", 70, 1282, "ПР: Патрон трехкулачковый ГОСТ 24351-80, люнет неподвижный"),
  opRow(724, "03", 70, 1282, "Установ А"),
  opRow(763, "О04", 70, 1282, "2. Подрезать торец, выдерживая размер 1."),
  opRow(803, "Т05", 70, 1282, "РИ: Резец подрезной 2112-0033 Т5К10 ГОСТ 18880-73; СИ: Линейка 1500 ГОСТ 427-75"),
  numRow(844, "Р06", 70, 1282, [[684, "37"], [834, "20"], [936, "2,5"], [1008, "1"], [1097, "0,4"], [1180, "800"], [1245, "92,9"]]),
  opRow(884, "О07", 70, 1282, "3. Сверлить центровое отверстие, выдерживая размеры 2..5."),
  opRow(922, "Т08", 70, 1282, "РИ: Сверло 2317-0005 Р6М5 ГОСТ 14952-75; СИ: штангенциркуль ШЦ-I-125-0,05 ГОСТ 166-89"),
  numRow(965, "Р09", 70, 1282, [[686, "2,5"], [830, "7"], [930, "1,25"], [1002, "1"], [1097, "0,1"], [1180, "800"], [1248, "6,3"]]),
  opRow(1003, "О10", 70, 1282, "4. Переустановить заготовку."),
  opRow(1043, "11", 70, 1282, "Установ Б"),
  opRow(1084, "Т12", 70, 1282, "ПР: Патрон трехкулачковый ГОСТ 24351-80, люнет подвижный, центр вращающийся"),
  [1135, [[113, "ОК", "", 6], [1282, "ОПЕРАЦИОННАЯ КАРТА МЕХАНИЧЕСКОЙ ОБРАБОТКИ", "a", 9.5]]],
];

/* sheet 5: sketch card */
const SketchSvg = () => (
  <svg width="100%" height="100%" viewBox="48 400 1475 730" preserveAspectRatio="none" fill="none" stroke="#666" strokeWidth="1">
    <path vectorEffect="non-scaling-stroke" d="M100 676H400M97 910H400M100 676C80 750 115 830 97 910" />
    <path vectorEffect="non-scaling-stroke" d="M418 676H718M418 910H722M718 676C700 740 740 840 722 910M742 676C722 740 762 840 745 910M742 676H1185M745 910H1185M1185 676V1030M416 910V1030" />
    <path vectorEffect="non-scaling-stroke" d="M401 676V910M418 676V910" stroke="#222" strokeWidth="2" />
    <path vectorEffect="non-scaling-stroke" d="M88 792H1196" stroke="#aaa" strokeDasharray="40 5 7 5" />
    <path vectorEffect="non-scaling-stroke" d="M416 1020H1210" />
    <path d="M416 1020l26-7v14zM1185 1020l-26-7v14z" fill="#222" stroke="none" />
    <ellipse vectorEffect="non-scaling-stroke" cx="1231" cy="1020" rx="21" ry="20" />
    <path vectorEffect="non-scaling-stroke" d="M566 613V658M555 658H577L566 676ZM929 613V658M918 658H940L929 676Z" />
    <path vectorEffect="non-scaling-stroke" d="M568 910L553 940H583ZM538 940H596M607 922L613 940H635L642 922M933 910L918 940H948ZM903 940H961M972 922L978 940H1000L1007 922" />
    <path vectorEffect="non-scaling-stroke" d="M1215 820V882M1185 851L1215 835V868Z" />
    <path vectorEffect="non-scaling-stroke" d="M1338 520L1350 545L1378 490H1503" />
    <text x="1225" y="1032" fontSize="30" fill="#444" stroke="none" fontFamily="Liberation Sans">1</text>
    <text x="762" y="1006" fontSize="26" textLength="83" lengthAdjust="spacingAndGlyphs" fontStyle="italic" fill="#555" stroke="none" fontFamily="Liberation Sans">1065±1,3</text>
    <text x="1384" y="532" fontSize="38" textLength="106" lengthAdjust="spacingAndGlyphs" fontStyle="italic" fill="#555" stroke="none" fontFamily="Liberation Sans">Ra 12,5</text>
  </svg>
);
const L5 = [177, 335, 463, 543];
const R5 = [1156, 1209, 1328, 1443, 1523];
const rows5: RowSpec[] = [
  [118, [[126, "", "dt dl"], [229, "", "dt dl"], [345, "", "dt dl"], [438, "", "dt dl"], [1104, "", "dt dl"], ...right(R5)]],
  [142, [...smallTable([126, 229, 345, 438], "Дубл."), [1104, "", "nt"], ...right(R5)]],
  [166, [...smallTable([126, 229, 345, 438], "Взам."), [700, "", "dt"], [752], [805], [921], [1024], [1104], ...right(R5)]],
  [196, [...smallTable([126, 229, 345, 438], "Подл."), [700, "", "nt"], [752], [805], [921], [1024], [1104], ...right(R5)]],
  [268, [[763], [1118], [1365, "0114000006", "", 9], [1443], [1523, "1", "", 5.5]]],
  [297, [...smallTable(L5, "Разраб."), [763], [1067, "", "Tt Tl"], [1287, "", "Tt Tl"], [1523, "", "Tt Tl Tr"]]],
  [323, [...smallTable(L5, "Провер."), [763, "", "nt"], [1067, "", "nt Tl"], [1287, "", "nt Tl"], [1523, "2014000000", "nt Tl Tr", 9]]],
  [347, [...smallTable(L5, ""), [763, "", "nt"], [1067, "", "nt Tl Tb"], [1287, "", "nt Tl Tb"], [1523, "", "nt Tl Tr Tb"]]],
  [376, [...smallTable(L5, ""), [634], [1300, "Вал", "nt b lo", 7.5], [1355, "", "nt"], [1410, "", "nt"], [1468, "", "nt"], [1523, "000", "nt lo", 5.5]]],
  [400, [...smallTable(L5, "Н.контр."), [634, "", "nt"], [1300, "", "nt"], [1355, "", "nt"], [1410, "", "nt"], [1468, "", "nt"], [1523, "", "nt"]]],
  [1130, [[1523, <SketchSvg />]]],
  [1160, [[163, "К.Э.", "dt", 6], [1523, "Карта эскизов", "", 9]]],
];

/* ---------- drawn ribbon icons ---------- */
const WordLogo = () => (
  <svg width="17" height="18" viewBox="0 0 17 18">
    <path d="M4 0h11a2 2 0 0 1 2 2v14a2 2 0 0 1-2 2H4z" fill="#2b7cd3" />
    <path d="M4 12h13v4a2 2 0 0 1-2 2H4z" fill="#103f91" />
    <rect x="0" y="4" width="10" height="10" rx="1" fill="#185abd" />
    <path d="M2 6.5l1 5 1-3.5 1 3.5 1-5" fill="none" stroke="#fff" strokeWidth=".9" />
  </svg>
);
const SaveIcon = () => (
  <svg width="16" height="18" viewBox="0 0 16 18" fill="#f1d6f1" stroke="#a32fa3" strokeWidth="1.4">
    <rect x="1" y="1" width="14" height="16" />
    <rect x="4" y="1" width="8" height="6" fill="#fff" />
    <rect x="3.5" y="10.5" width="9" height="6.5" fill="#fff" />
  </svg>
);
const PasteIcon = () => (
  <svg width="30" height="31" viewBox="0 0 30 31" fill="none">
    <path d="M2 5h20v22H2z" stroke="#e59b2d" strokeWidth="1.5" fill="#fff" />
    <path d="M8 5l4-3 4 3v2H8z" stroke="#777" fill="#fff" />
    <rect x="14" y="12" width="15" height="18" fill="#fff" stroke="#333" />
  </svg>
);
const Lines = ({ dots, num, x = 0 }: { dots?: boolean; num?: boolean; x?: number }) => (
  <svg width="20" height="18" viewBox="0 0 20 18" stroke="#555">
    <path d="M7 3.5H20M7 9H20M7 14.5H20" />
    {dots && <path d="M1 2h3v3H1zM1 7.5h3v3H1zM1 13h3v3H1z" fill="#1f6fc4" stroke="none" />}
    {num && (
      <g fill="#1f6fc4" stroke="none" fontSize="6" fontFamily="Liberation Sans" fontWeight="700">
        <text x={x} y="6">1</text>
        <text x={x} y="12">2</text>
        <text x={x} y="18">3</text>
      </g>
    )}
  </svg>
);
const Align = ({ kind }: { kind: "l" | "c" | "r" | "j" }) => {
  const short = kind === "l" ? "M1 5.5H11M1 13H11" : kind === "c" ? "M4 5.5H12M4 13H12" : kind === "r" ? "M5 5.5H15M5 13H15" : "M1 5.5H15M1 13H15";
  return (
    <svg width="16" height="18" viewBox="0 0 16 18" stroke="#555">
      <path d="M1 2H15M1 9.5H15M1 16.5H15" />
      <path d={short} />
    </svg>
  );
};
const IndentIcon = ({ flip }: { flip?: boolean }) => (
  <svg width="16" height="16" viewBox="0 0 16 16" fill="none">
    <path d="M7 2H16M9 6H16M9 10H16M7 14H16" stroke="#555" />
    <path d={flip ? "M1 8H6M4 5.5L6.5 8 4 10.5" : "M6 8H1M3.5 5.5L1 8l2.5 2.5"} stroke="#1f6fc4" />
  </svg>
);
const SpacingIcon = () => (
  <svg width="18" height="20" viewBox="0 0 18 20" fill="none">
    <path d="M8 3H18M8 8H18M8 13H18M8 18H18" stroke="#555" />
    <path d="M3 1V19M1 4L3 1 5 4M1 16L3 19 5 16" stroke="#1f6fc4" />
  </svg>
);
const BordersIcon = () => (
  <svg width="17" height="20" viewBox="0 0 17 20" fill="none">
    <path d="M1 1H16V15H1ZM8.5 1V15M1 8H16" stroke="#777" strokeDasharray="1.5 1.5" />
    <path d="M0 18H17" stroke="#222" strokeWidth="2" />
  </svg>
);
const PdfIcon = () => (
  <svg width="26" height="30" viewBox="0 0 26 30" fill="none" stroke="#3b7ed6" strokeWidth="1.2">
    <path d="M2 1H15L20 6V22H2Z" fill="#fff" />
    <path d="M15 1V6H20M6 17C9 15 11 10 10 7 9 10 12 15 16 15 12 15 9 16 6 17Z" />
    <path d="M17 24l4-6a2.4 2.4 0 0 1 4 2.500l-5 7a2.400 2.400 0 0 1-4-2.500l3-4.500" />
  </svg>
);
const AddinsIcon = () => (
  <svg width="28" height="30" viewBox="0 0 28 30" fill="none" stroke="#c8532f" strokeWidth="1.6">
    <rect x="1" y="1" width="26" height="28" />
    <path d="M4 4h9v10H4zM15 4h9v10h-9zM4 16h9v10H4zM15 16h9v10h-9z" strokeWidth="1.1" />
  </svg>
);
const PageIcon = () => (
  <svg width="13" height="15" viewBox="0 0 13 15" fill="none" stroke="#333">
    <rect x=".5" y=".5" width="12" height="14" />
    <path d="M3 3.500H10M3 6H10M3 8.500H10M3 11H10" />
  </svg>
);
const WebIcon = () => (
  <svg width="15" height="15" viewBox="0 0 15 15" fill="none" stroke="#333">
    <path d="M.5.500H11V7M.5.500V14H7M3 3.500H9M3 6H7M3 8.500H6" />
    <circle cx="10.500" cy="10.500" r="4" fill="#333" stroke="none" />
    <path d="M6.500 10.500H14.500M10.500 6.500V14.500" stroke="#fff" strokeWidth=".8" />
  </svg>
);
const FocusIcon = () => (
  <svg width="14" height="14" viewBox="0 0 14 14" fill="none" stroke="#333">
    <path d="M.5 3V.5H3M11 .5H13.500V3M13.500 11V13.500H11M3 13.500H.5V11" />
    <path d="M4 2.500H8L10.500 5V11.500H4Z" />
  </svg>
);

const rulerNums = [2, 4, 6, 8, 10, 12, 14, 16, 18, 20, 22, 24, 26];
const vNums = [2, 4, 6, 8, 10, 12, 14, 16, 18];
const tabs: [string, number, number, boolean?][] = [
  ["Файл", 16, 29], ["Главная", 22, 52, true], ["Вставка", 21, 45], ["Рисование", 23, 62], ["Конструктор", 25, 74], ["Макет", 24, 37], ["Ссылки", 22, 43],
  ["Рассылки", 25, 55], ["Рецензирование", 25, 99], ["Вид", 24, 21], ["Справка", 22, 50], ["Acrobat", 22, 46],
];

const Gost = ({ a, b, gap = 23, w = 534 }: { a: string; b: string; gap?: number; w?: number }) => (
  <GostLine $gap={gap} $w={w}>
    <span>{a}</span>
    <span>{b}</span>
  </GostLine>
);

export default function App() {
  return (
    <Shell>
      <Global />
      <TitleBar>
        <Gap $ml={16}><WordLogo /></Gap>
        <Gap $ml={15} $w={88}>Автосохранение</Gap>
        <Gap $ml={7}><Toggle /></Gap>
        <Gap $ml={12}><SaveIcon /></Gap>
        <Gap $ml={13}><Undo2 size={18} color="#b5b5b5" strokeWidth={1.3} /></Gap>
        <Gap $ml={4}><SmallChev color="#c8c8c8" /></Gap>
        <Gap $ml={5}><RotateCw size={18} color="#b5b5b5" strokeWidth={1.3} /></Gap>
        <Gap $ml={16}><SmallChev color="#333" /></Gap>
        <Gap $ml={24} $w={406}>Вал_комплект&nbsp; - &nbsp;режим совместимости&nbsp; •&nbsp; Сохранено в: этот компьютер</Gap>
        <Gap $w={13}><ChevronDown size={13} strokeWidth={1.3} /></Gap>
        <SearchBox>
          <Search size={15} strokeWidth={1.3} style={{ transform: "scaleX(-1)" }} />
          Поиск
        </SearchBox>
        <LoginBtn>Вход</LoginBtn>
        <Gap $ml={27}><Minus size={13} strokeWidth={1.3} /></Gap>
        <Gap $ml={34}><Copy size={12} strokeWidth={1.2} /></Gap>
        <Gap $ml={36}><X size={15} strokeWidth={1.1} /></Gap>
      </TitleBar>

      <MenuBar>
        {tabs.map(([t, x, w, on]) => (
          <Tab key={t} $x={x} $w={w} $active={on}>{t}</Tab>
        ))}
        <ShareBtn>
          <Share size={13} strokeWidth={1.5} />
          Общий доступ
          <SmallChev />
        </ShareBtn>
      </MenuBar>

      <Ribbon>
        <Group $w={215}>
          <GroupBody>
            <PasteCol>
              <PasteIcon />
              <PasteLabel>Вставить</PasteLabel>
              <SmallChev />
            </PasteCol>
            <ClipCol>
              <ClipRow $off><Scissors size={16} strokeWidth={1.2} />Вырезать</ClipRow>
              <ClipRow $off><Files size={16} strokeWidth={1.2} />Копировать</ClipRow>
              <ClipRow><Paintbrush size={16} color="#d9822b" strokeWidth={1.5} />Формат по образцу</ClipRow>
            </ClipCol>
          </GroupBody>
          <GroupLabel>Буфер обмена<Launcher /></GroupLabel>
        </Group>

        <Group $w={313}>
          <GroupBody>
            <ToolRows>
              <ToolRow>
                <FieldBox $w={112}><Clip>Times New Roman</Clip><SmallChev /></FieldBox>
                <FieldBox $w={54} $ml={3}><Clip>12</Clip><SmallChev /></FieldBox>
                <Tool $w={17} $ml={8} $fs={17}>A<sup>˄</sup></Tool>
                <Tool $w={17} $ml={10} $fs={15}>A<sup>˅</sup></Tool>
                <Sep $ml={3} />
                <Tool $w={20} $ml={6} $fs={14}>Aa</Tool>
                <Tool $w={12}><SmallChev /></Tool>
                <Sep $ml={6} />
                <Tool $w={18} $ml={6} $fs={16}><i>A</i><Highlighter size={9} color="#a32fa3" /></Tool>
              </ToolRow>
              <ToolRow>
                <Tool $w={24} $on $fs={14}><b>Ж</b></Tool>
                <Tool $w={12} $ml={8} $fs={14}><i>К</i></Tool>
                <Tool $w={13} $ml={14} $fs={14}><u>Ч</u></Tool>
                <Tool $w={12}><SmallChev /></Tool>
                <Tool $w={16} $ml={15}><s>ab</s></Tool>
                <Tool $w={11} $ml={14} $fs={14}><b>x</b><sub>2</sub></Tool>
                <Tool $w={13} $ml={14} $fs={14}><b>x</b><sup>2</sup></Tool>
                <Sep $ml={5} />
                <Tool $w={15} $ml={7} $off $fs={18}><b>A</b></Tool>
                <Tool $w={12} $off><SmallChev /></Tool>
                <Tool $w={18} $ml={14}>
                  <ColorStack>
                    <Highlighter size={15} strokeWidth={1.2} />
                    <ColorBar $c="#ffe600" />
                  </ColorStack>
                </Tool>
                <Tool $w={12}><SmallChev /></Tool>
                <Tool $w={18} $ml={9} $fs={15}>
                  <ColorStack>
                    A
                    <ColorBar $c="#e00000" />
                  </ColorStack>
                </Tool>
                <Tool $w={12}><SmallChev /></Tool>
              </ToolRow>
            </ToolRows>
          </GroupBody>
          <GroupLabel>Шрифт<Launcher /></GroupLabel>
        </Group>

        <Group $w={250}>
          <GroupBody>
            <ToolRows>
              <ToolRow>
                <Tool $w={22} $ml={3}><Lines dots /></Tool>
                <Tool $w={12}><SmallChev /></Tool>
                <Tool $w={20} $ml={6}><Lines num /></Tool>
                <Tool $w={12} $ml={1}><SmallChev /></Tool>
                <Tool $w={17} $ml={9}><Lines num x={3} /></Tool>
                <Tool $w={12} $ml={2}><SmallChev /></Tool>
                <Sep $ml={7} />
                <Tool $w={16} $ml={6}><IndentIcon /></Tool>
                <Tool $w={16} $ml={11}><IndentIcon flip /></Tool>
                <Sep $ml={5} />
                <Tool $w={18} $ml={6}><SortText>А<br />Я</SortText>↓</Tool>
                <Tool $w={14} $ml={12} $fs={16}><b>¶</b></Tool>
              </ToolRow>
              <ToolRow>
                <Tool $w={16} $ml={3}><Align kind="l" /></Tool>
                <Tool $w={16} $ml={11}><Align kind="c" /></Tool>
                <Tool $w={24} $ml={5} $on><Align kind="r" /></Tool>
                <Tool $w={16} $ml={7}><Align kind="j" /></Tool>
                <Sep $ml={5} />
                <Tool $w={18} $ml={6}><SpacingIcon /></Tool>
                <Tool $w={12}><SmallChev /></Tool>
                <Sep $ml={9} />
                <Tool $w={18} $ml={6}><PaintBucket size={16} strokeWidth={1.2} /></Tool>
                <Tool $w={12}><SmallChev /></Tool>
                <Tool $w={18} $ml={8}><BordersIcon /></Tool>
                <Tool $w={12}><SmallChev /></Tool>
              </ToolRow>
            </ToolRows>
          </GroupBody>
          <GroupLabel>Абзац<Launcher /></GroupLabel>
        </Group>

        <Group $w={803}>
          <GroupBody>
            <Gallery>
              <StyleItem $w={110} $size={12} $i $b>Выделение</StyleItem>
              <StyleItem $w={107} $size={40} $left>Загол</StyleItem>
              <StyleItem $w={112} $size={19}>Заголовок 1</StyleItem>
              <StyleItem $w={102} $size={12.3} $b>Заголовок 2</StyleItem>
              <StyleItem $w={105} $size={17.5} $b $sans $left>Заголовок 3</StyleItem>
              <StyleItem $w={117} $size={20} $b>Заголовок</StyleItem>
              <StyleItem $w={106} $size={17} $b $i>Заголовок 5</StyleItem>
              <GalleryArrow><SmallChev /></GalleryArrow>
            </Gallery>
          </GroupBody>
          <GroupLabel>Стили<Launcher /></GroupLabel>
        </Group>

        <Group $w={113}>
          <GroupBody>
            <EditCol>
              <EditRow><Search size={16} strokeWidth={1.2} style={{ transform: "scaleX(-1)" }} />Найти<Gap $ml={10}><SmallChev /></Gap></EditRow>
              <EditRow><Replace size={16} strokeWidth={1.3} color="#2a75c8" />Заменить</EditRow>
              <EditRow><MousePointer2 size={15} strokeWidth={1.2} />Выделить<SmallChev /></EditRow>
            </EditCol>
          </GroupBody>
          <GroupLabel>Редактирование</GroupLabel>
        </Group>

        <Group $w={85}>
          <GroupBody>
            <BigCol><BigIcon><PdfIcon /></BigIcon>Создать<br />PDF</BigCol>
          </GroupBody>
          <GroupLabel>Adobe Acrobat</GroupLabel>
        </Group>

        <Group $w={86}>
          <GroupBody>
            <BigCol><BigIcon><AddinsIcon /></BigIcon>Надстройки</BigCol>
          </GroupBody>
          <GroupLabel>Надстройки</GroupLabel>
        </Group>
        <Collapse><ChevronDown size={14} strokeWidth={1.3} /></Collapse>
      </Ribbon>

      <RulerBar>
        <Corner />
        <HTicks />
        <HStrip>
          {rulerNums.map((n) => (
            <HCell key={n}>{n}</HCell>
          ))}
        </HStrip>
        <IndentMark $x={125} $y={4} $h={22}>
          <svg width="13" height="22" viewBox="0 0 13 22" fill="#f4f4f4" stroke="#999">
            <path d="M.5.500H12.500V5L6.500 10 .5 5ZM.5 15L6.500 10 12.500 15ZM.5 15.500H12.500V21.500H.5Z" />
          </svg>
        </IndentMark>
        <IndentMark $x={650} $y={8} $h={10}>
          <svg width="13" height="10" viewBox="0 0 13 10" fill="#f4f4f4" stroke="#999">
            <path d="M.5 9.500V4.500L6.500 .5 12.500 4.500V9.500Z" />
          </svg>
        </IndentMark>
      </RulerBar>

      <DocArea>
        <VRuler>
          <VTicks />
          <VStrip>
            {vNums.map((n) => (
              <VCell key={n}><VNum>{n}</VNum></VCell>
            ))}
          </VStrip>
        </VRuler>
        <Canvas>
          <PageGrid>
            <Page>
              <TextCaret />
              <Gost a="ГОСТ 3.1117-81" b="Форма 2" />
              <Sheet x0={50} y0={100} sx={2.751} rows={rows1} />
            </Page>
            <Page>
              <MoveHandle><Move size={10} strokeWidth={1} /></MoveHandle>
              <SizeHandle />
              <Gost a="ГОСТ 3.1404-86" b="Форма 1" />
              <Sheet x0={48} y0={100} sx={2.751} rows={rows2} />
            </Page>
            <Page>
              <Gost a="ГОСТ 3.1118-82" b="Форма 1а" gap={7} />
              <Sheet x0={15} y0={100} sx={2.376} rows={rows3} />
            </Page>
            <Page>
              <Gost a="ГОСТ 3.1404-86" b="Форма 3" />
              <Sheet x0={50} y0={94} sx={2.751} rows={rows4} />
            </Page>
            <Page>
              <Gost a="ГОСТ 3.1105-84" b="Форма 7" w={537} />
              <Sheet x0={48} y0={94} sx={2.751} rows={rows5} />
            </Page>
            <Page>
              <Gost a="ГОСТ 3.1404-86" b="Форма 3" />
              <Sheet x0={15} y0={94} sx={2.376} rows={rows6} />
            </Page>
            <Page />
            <Page />
            <Page />
          </PageGrid>
        </Canvas>
        <Scrollbar>
          <ScrollArrow />
          <ScrollThumb />
          <ScrollArrow $down />
        </Scrollbar>
      </DocArea>

      <StatusBar>
        <Gap $ml={11} $w={91}>Страница 1 из 24</Gap>
        <Gap $ml={20} $w={89}>Число слов: 2046</Gap>
        <Gap $ml={19} $w={97}>английский (США)</Gap>
        <Gap $ml={18} $w={15}><PersonStanding size={15} strokeWidth={1.3} /></Gap>
        <Gap $ml={3} $w={262}><TightText>Специальные возможности: не поддерживаются</TightText></Gap>
        <Gap $ml={894} $w={14}><FocusIcon /></Gap>
        <Gap $ml={3} $w={68}>Фокусировка</Gap>
        <ViewBtn $x={12}><BookOpen size={14} strokeWidth={1.2} /></ViewBtn>
        <ViewBtn $x={0} $on><PageIcon /></ViewBtn>
        <ViewBtn $x={0}><WebIcon /></ViewBtn>
        <Gap $ml={7} $w={10}><Minus size={10} strokeWidth={1.5} /></Gap>
        <Zoomer><ZoomThumb /><ZoomTick /></Zoomer>
        <Gap $ml={6} $w={10}><Plus size={10} strokeWidth={1.5} /></Gap>
        <Gap $ml={11}>50 %</Gap>
      </StatusBar>
      <Taskbar>
        <TaskThumb $x={52} />
        <TaskThumb $x={53} />
        <TaskThumb $x={4} />
        <TaskThumb $x={4} $on />
      </Taskbar>
    </Shell>
  );
}
